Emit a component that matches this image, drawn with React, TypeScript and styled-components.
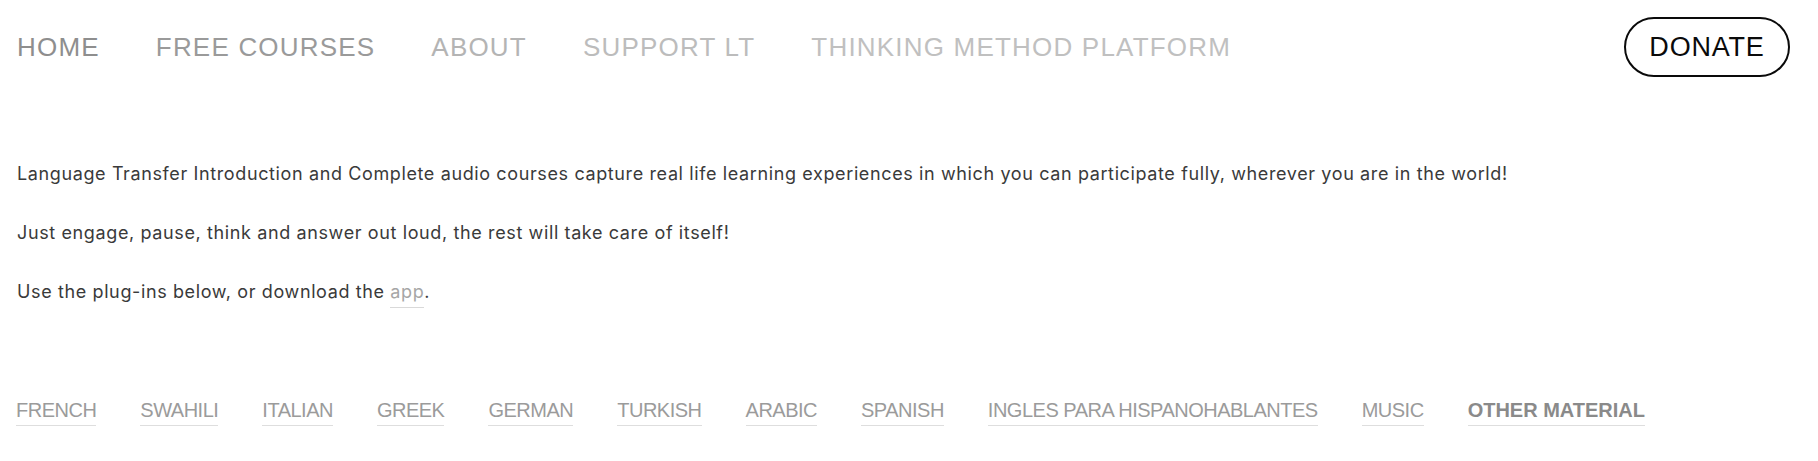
import React from "react";
import styled, { createGlobalStyle } from "styled-components";

const GlobalStyle = createGlobalStyle`
  html, body {
    margin: 0;
    padding: 0;
    background: #ffffff;
  }
  body {
    font-family: "Liberation Sans", Arial, sans-serif;
    -webkit-font-smoothing: antialiased;
  }
`;

const Page = styled.div`
  width: 1818px;
  min-height: 461px;
  box-sizing: border-box;
  padding: 17px 28px 0 17px;
  display: flex;
  flex-direction: column;
`;

const Header = styled.header`
  display: flex;
  align-items: center;
  justify-content: space-between;
  height: 60px;
`;

const Nav = styled.nav`
  display: flex;
  align-items: center;
  gap: 56px;
`;

const NavLink = styled.a<{ $tone: string }>`
  font-family: "Liberation Sans", Arial, sans-serif;
  font-size: 26px;
  line-height: 30px;
  letter-spacing: 1.2px;
  color: ${(p) => p.$tone};
  text-decoration: none;
  text-transform: uppercase;
  white-space: nowrap;
`;

const DonateButton = styled.a`
  display: flex;
  align-items: center;
  justify-content: center;
  box-sizing: border-box;
  width: 166px;
  height: 60px;
  border: 2px solid #0a0a0a;
  border-radius: 30px;
  font-family: "Liberation Sans", Arial, sans-serif;
  font-size: 27px;
  letter-spacing: 0.8px;
  color: #0a0a0a;
  text-decoration: none;
`;

const Main = styled.main`
  padding-top: 81px;
  display: flex;
  flex-direction: column;
`;

const Paragraph = styled.p`
  margin: 0 0 27px 0;
  font-family: Inter, "Liberation Sans", Arial, sans-serif;
  font-size: 18px;
  font-weight: 400;
  line-height: 32px;
  letter-spacing: 0.62px;
  color: #3a3a3a;
  &:last-of-type {
    margin-bottom: 0;
  }
`;

const InlineLink = styled.a`
  color: #a6a6a6;
  text-decoration: none;
  padding-bottom: 5px;
  border-bottom: 1px solid #d9d9d9;
`;

const Tabs = styled.div`
  display: flex;
  align-items: flex-start;
  gap: 44px;
  margin-top: 90px;
  margin-left: -1px;
`;

const Tab = styled.a<{ $active?: boolean }>`
  display: inline-block;
  font-family: "Liberation Sans", Arial, sans-serif;
  font-size: 20px;
  line-height: 24px;
  padding-bottom: 3px;
  letter-spacing: ${(p) => (p.$active ? "0px" : "-0.5px")};
  font-weight: ${(p) => (p.$active ? 700 : 400)};
  color: ${(p) => (p.$active ? "#8a8a8a" : "#9b9b9b")};
  border-bottom: 1px solid #dedede;
  text-decoration: none;
  white-space: nowrap;
`;

const navItems: { label: string; tone: string }[] = [
  { label: "Home", tone: "#8e8e8e" },
  { label: "Free Courses", tone: "#9a9a9a" },
  { label: "About", tone: "#b4b4b4" },
  { label: "Support LT", tone: "#bcbcbc" },
  { label: "Thinking Method Platform", tone: "#c0c0c0" },
];

const tabs = [
  "FRENCH",
  "SWAHILI",
  "ITALIAN",
  "GREEK",
  "GERMAN",
  "TURKISH",
  "ARABIC",
  "SPANISH",
  "INGLES PARA HISPANOHABLANTES",
  "MUSIC",
  "OTHER MATERIAL",
];

export default function App() {
  return (
    <>
      <GlobalStyle />
      <Page>
        <Header>
          <Nav>
            {navItems.map((n) => (
              <NavLink key={n.label} href="#" $tone={n.tone}>
                {n.label}
              </NavLink>
            ))}
          </Nav>
          <DonateButton href="#">DONATE</DonateButton>
        </Header>
        <Main>
          <Paragraph>
            Language Transfer Introduction and Complete audio courses capture real life
            learning experiences in which you can participate fully, wherever you are in
            the world!
          </Paragraph>
          <Paragraph>
            Just engage, pause, think and answer out loud, the rest will take care of itself!
          </Paragraph>
          <Paragraph>
            Use the plug-ins below, or download the <InlineLink href="#">app</InlineLink>.
          </Paragraph>
          <Tabs>
            {tabs.map((t) => (
              <Tab key={t} href="#" $active={t === "OTHER MATERIAL"}>
                {t}
              </Tab>
            ))}
          </Tabs>
        </Main>
      </Page>
    </>
  );
}
